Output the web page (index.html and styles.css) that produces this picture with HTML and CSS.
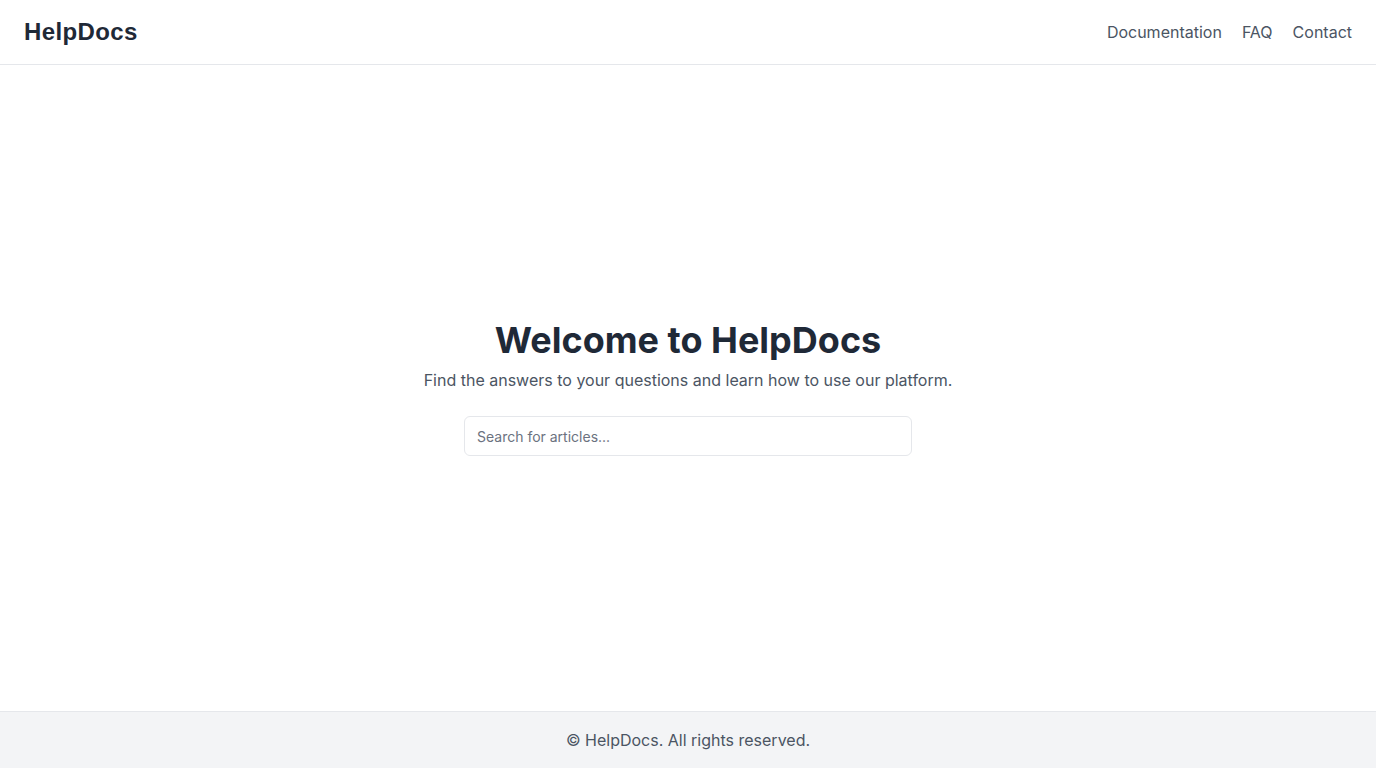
FILE: index.html
```html
<!DOCTYPE html>
<html lang="en">
<head>
<meta charset="utf-8">
<title>HelpDocs</title>
<link rel="stylesheet" href="styles.css">
</head>
<body>
<div class="page">
  <header class="header">
    <div class="logo">HelpDocs</div>
    <nav class="nav">
      <a href="#">Documentation</a>
      <a href="#">FAQ</a>
      <a href="#">Contact</a>
    </nav>
  </header>
  <main class="main">
    <div class="hero">
      <h1 class="title">Welcome to HelpDocs</h1>
      <p class="subtitle">Find the answers to your questions and learn how to use our platform.</p>
      <input class="search" type="text" placeholder="Search for articles...">
    </div>
  </main>
  <footer class="footer">© HelpDocs. All rights reserved.</footer>
</div>
</body>
</html>
```
FILE: styles.css
```css
* { box-sizing: border-box; }
html, body { margin: 0; padding: 0; height: 100%; }
body {
  font-family: Inter, "Noto Sans", sans-serif;
  color: #1f2937;
  background: #fff;
}
.page {
  min-height: 100vh;
  display: flex;
  flex-direction: column;
}
.header {
  height: 65px;
  display: flex;
  align-items: center;
  justify-content: space-between;
  padding: 0 24px;
  border-bottom: 1px solid #e5e7eb;
}
.logo {
  font-family: "Liberation Sans", Arial, sans-serif;
  font-size: 24px;
  line-height: 32px;
  font-weight: 700;
  letter-spacing: 0.375px;
  color: #1f2937;
}
.nav {
  display: flex;
  gap: 20px;
}
.nav a {
  color: #4b5563;
  text-decoration: none;
  font-size: 16px;
  line-height: 24px;
}
.main {
  flex: 1;
  display: flex;
  align-items: center;
  justify-content: center;
}
.hero {
  display: flex;
  flex-direction: column;
  align-items: center;
  text-align: center;
}
.title {
  margin: 0 0 8px;
  font-size: 36px;
  line-height: 40px;
  font-weight: 700;
  color: #1f2937;
}
.subtitle {
  margin: 0;
  font-size: 16px;
  line-height: 24px;
  color: #4b5563;
}
.search {
  margin-top: 24px;
  width: 448px;
  height: 40px;
  padding: 8px 12px;
  border: 1px solid #e5e7eb;
  border-radius: 6px;
  font-family: Inter, sans-serif;
  font-size: 14px;
  color: #1f2937;
  outline: none;
}
.search::placeholder { color: #6b7280; }
.footer {
  background: #f3f4f6;
  border-top: 1px solid #e5e7eb;
  padding: 16px;
  text-align: center;
  font-size: 16px;
  line-height: 24px;
  color: #4b5563;
}
```
